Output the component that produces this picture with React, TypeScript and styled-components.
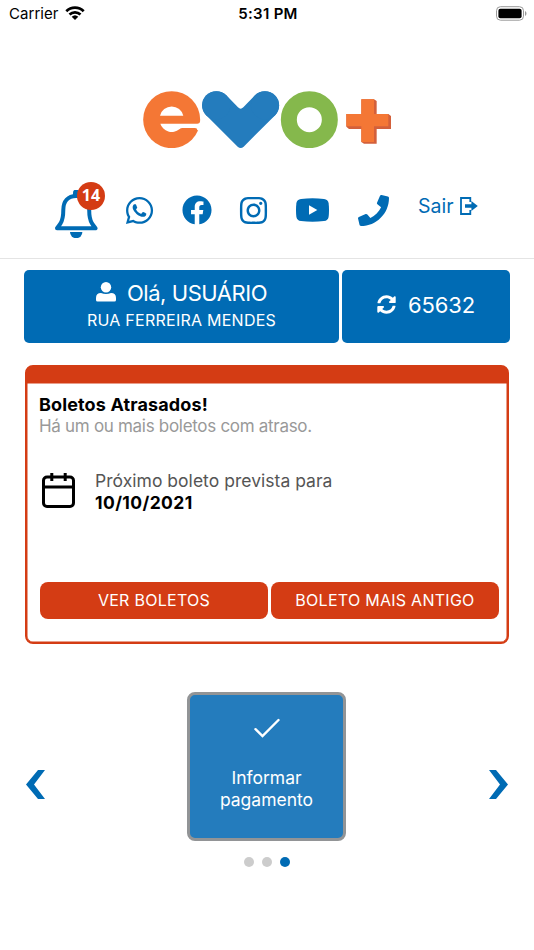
import React from "react";
import styled, { createGlobalStyle } from "styled-components";
import { FaFacebook, FaInstagram, FaPhone, FaSyncAlt, FaWhatsapp } from "react-icons/fa";

const blue = "#006bb4";
const red = "#d43c14";

const GlobalStyle = createGlobalStyle`
  * { box-sizing: border-box; }
  body { margin: 0; background: #fff; font-family: Inter, "Liberation Sans", sans-serif; }
  svg { display: block; flex: none; }
  button { font: inherit; border: 0; margin: 0; padding: 0; background: none; cursor: pointer; }
`;

const Screen = styled.main`
  width: 534px;
  height: 950px;
  display: flex;
  flex-direction: column;
  overflow: hidden;
`;

const StatusBar = styled.div`
  height: 28px;
  display: grid;
  grid-template-columns: 1fr auto 1fr;
  align-items: center;
  padding: 0 7px 0 9px;
  color: #000;
`;

const Carrier = styled.div`
  display: flex;
  align-items: center;
  gap: 6px;

  svg { margin-bottom: 2px; }
`;

const Battery = styled.svg`
  justify-self: end;
  margin-bottom: 2px;
`;

const Text = styled.span<{ $size: number; $weight?: number; $spacing?: number; $color?: string; $line?: number }>`
  font-size: ${(p) => p.$size}px;
  font-weight: ${(p) => p.$weight ?? 400};
  letter-spacing: ${(p) => p.$spacing ?? 0}px;
  color: ${(p) => p.$color ?? "inherit"};
  line-height: ${(p) => p.$line ?? 22}px;
  white-space: nowrap;
`;

const Header = styled.header`
  height: 231px;
  padding-top: 63px;
  border-bottom: 1px solid #e4e4e4;
`;

const Logo = styled.svg`
  margin-left: 143px;
`;

const IconRow = styled.nav`
  display: flex;
  align-items: center;
  height: 56px;
  margin: 34px 0 0 55px;
  color: ${blue};
`;

const IconButton = styled.button<{ $width: number; $gap?: number }>`
  width: ${(p) => p.$width}px;
  height: 56px;
  margin-right: ${(p) => p.$gap ?? 29}px;
  display: flex;
  align-items: center;
  justify-content: center;
  position: relative;
  color: inherit;
`;

const Bell = styled.svg`
  margin-top: 8px;
`;

const Badge = styled.span`
  position: absolute;
  top: 0;
  left: 22px;
  width: 28px;
  height: 28px;
  border-radius: 50%;
  background: ${red};
  color: #fff;
  font: 700 16px/27px "Noto Sans", sans-serif;
  text-align: center;
`;

const Logout = styled.button`
  display: flex;
  align-items: center;
  gap: 6px;
  height: 22px;
  margin-bottom: 8px;
  color: ${blue};
`;

const Account = styled.section`
  display: grid;
  grid-template-columns: 315px 168px;
  gap: 3px;
  margin: 11px 0 0 24px;
  color: #fff;
`;

const AccountBox = styled.div`
  height: 73px;
  padding-bottom: 3px;
  border-radius: 5px;
  background: ${blue};
  display: flex;
  flex-direction: column;
  align-items: center;
  justify-content: center;
`;

const Line = styled.div<{ $gap: number }>`
  display: flex;
  align-items: center;
  gap: ${(p) => p.$gap}px;

  svg { margin-bottom: 2px; }
`;

const Card = styled.section`
  width: 484px;
  height: 279px;
  margin: 22px 0 0 25px;
  border: 2px solid ${red};
  border-top-width: 18px;
  border-radius: 8px;
  box-shadow: inset 0 0 0 0.5px ${red};
  display: flex;
  flex-direction: column;
  padding: 11px 8px 0 12px;
`;

const Stack = styled.div`
  display: flex;
  flex-direction: column;
`;

const NextBill = styled.div`
  display: flex;
  align-items: center;
  gap: 20px;
  margin: 33px 0 0 3px;
  height: 44px;

  svg { margin-bottom: 3px; }
`;

const Actions = styled.div`
  display: grid;
  grid-template-columns: 228px 228px;
  gap: 3px;
  margin: 68px 0 0 1px;
`;

const ActionButton = styled.button`
  height: 37px;
  padding-bottom: 1px;
  border-radius: 8px;
  background: ${red};
  color: #fff;
`;

const Carousel = styled.section`
  display: flex;
  justify-content: space-between;
  align-items: center;
  margin: 48px 26px 0 26px;
  height: 149px;
`;

const Arrow = styled.button`
  margin-top: 36px;
  color: ${blue};
`;

const Slide = styled.button`
  width: 159px;
  height: 149px;
  margin-right: 1px;
  border: 3px solid #929496;
  border-radius: 8px;
  background: #247cbd;
  color: #fff;
  display: flex;
  flex-direction: column;
  align-items: center;
  justify-content: flex-start;
  padding-top: 21px;
  gap: 27px;
`;

const Dots = styled.div`
  display: flex;
  justify-content: center;
  gap: 8px;
  margin-top: 16px;
`;

const Dot = styled.i<{ $active?: boolean }>`
  width: 10px;
  height: 10px;
  border-radius: 50%;
  background: ${(p) => (p.$active ? blue : "#ccc")};
`;

export default function App() {
  return (
    <Screen>
      <GlobalStyle />
      <StatusBar>
        <Carrier>
          <Text $size={15} $spacing={0.05}>Carrier</Text>
          <svg width="20" height="15" viewBox="0 0 20 15">
            <g fill="none" stroke="#000" strokeWidth="2.7">
              <path d="M1.3 5.2a12.5 12.5 0 0 1 17.4 0" />
              <path d="M4.5 8.5a8 8 0 0 1 11 0" />
            </g>
            <path d="M6.7 10.7a4.8 4.8 0 0 1 6.6 0L10 14Z" />
          </svg>
        </Carrier>
        <Text $size={15} $weight={600} $spacing={0.3}>5:31 PM</Text>
        <Battery width="32" height="15" viewBox="0 0 32 15">
          <rect x="1.5" y=".7" width="27" height="13.5" rx="4" fill="none" stroke="#999" />
          <rect x="3.4" y="2.7" width="23.2" height="9.5" rx="2" />
          <path d="M30 5v5c2-1 2-4 0-5" fill="#999" />
        </Battery>
      </StatusBar>

      <Header>
        <Logo width="248" height="57" viewBox="39 33 744 171">
          <circle cx="125" cy="119" r="85.5" fill="#f47735" />
          <path d="M90 107a36 36 0 0 1 70 0Z" fill="#fff" />
          <path d="M91 131H202Q208 131 211 125V151H202Q202 144 195 144H158Q152 144 148 148A36 36 0 0 1 91 131Z" fill="#fff" />
          <path d="M227 104A42.5 42.5 0 0 1 289 46L324 82Q332 90 340 82L375 46A42.5 42.5 0 0 1 437 104L341 200Q332 208 323 200Z" fill="#247cbd" />
          <circle cx="258.5" cy="76" r="42.5" fill="#247cbd" />
          <circle cx="405" cy="76" r="42.5" fill="#247cbd" />
          <circle cx="538" cy="119" r="61.5" fill="none" stroke="#85b84c" strokeWidth="48" />
          <path d="M694 58H732L740 63V102H775L783 108V147H740V191H702L694 186V147H657L649 140V102H694Z" fill="#d3603b" />
          <path d="M694 58H732V102H775V139H732V186H694V139H649V102H694Z" fill="#f47735" />
        </Logo>
        <IconRow>
          <IconButton $width={43} $gap={28} aria-label="Notificações">
            <Bell width="43" height="48" viewBox="0 0 43 48">
              <path d="M5.5 33.5C8 29.5 8.3 24.5 8.3 20C8.3 11 13 6 21.2 6S34.2 11 34.2 20C34.2 24.5 34.5 29.5 37 33.5L40.5 38.3H2Z" fill="none" stroke="currentColor" strokeWidth="4" strokeLinejoin="round" />
              <path d="M18 7V2.8a3.2 3.2 0 0 1 6.4 0V7Z" fill="currentColor" />
              <path d="M15 42H27.4a6.2 6.2 0 0 1-12.4 0" fill="currentColor" />
            </Bell>
            <Badge>14</Badge>
          </IconButton>
          <IconButton $width={27} aria-label="WhatsApp"><FaWhatsapp size={31} /></IconButton>
          <IconButton $width={29} aria-label="Facebook"><FaFacebook size={30} /></IconButton>
          <IconButton $width={27} aria-label="Instagram"><FaInstagram size={31} /></IconButton>
          <IconButton $width={33} aria-label="YouTube">
            <svg width="33" height="24" viewBox="0 0 33 24">
              <path d="M5 .9Q16.5-.4 28 .9Q32 1.4 32.6 5Q33.4 12 32.6 19Q32 22.6 28 23.1Q16.5 24.4 5 23.1Q1 22.6.4 19Q-.4 12 .4 5Q1 1.4 5 .9Z" fill="currentColor" />
              <path d="M13 7.2L21.3 12L13 16.8Z" fill="#fff" />
            </svg>
          </IconButton>
          <IconButton $width={31} aria-label="Telefone"><FaPhone size={31} /></IconButton>
          <Logout>
            <Text $size={19.5}>Sair</Text>
            <svg width="18" height="18" viewBox="0 0 18 18">
              <path d="M10.3 5V1H1V17H10.3V13" fill="none" stroke="currentColor" strokeWidth="1.8" />
              <path d="M5 7.2H11.4V4L17.8 9L11.4 14V10.8H5Z" fill="currentColor" />
            </svg>
          </Logout>
        </IconRow>
      </Header>

      <Account>
        <AccountBox>
          <Line $gap={11}>
            <svg width="20" height="20" viewBox="0 0 20 20" fill="currentColor">
              <circle cx="10" cy="5.2" r="5.2" />
              <path d="M0 18V16Q0 11 5 11Q10 13 15 11Q20 11 20 16V18Q20 19.6 18.4 19.6H1.6Q0 19.6 0 18Z" />
            </svg>
            <Text $size={22} $line={30} $spacing={-0.45}>Olá, USUÁRIO</Text>
          </Line>
          <Text $size={16} $line={24} $spacing={0.25}>RUA FERREIRA MENDES</Text>
        </AccountBox>
        <AccountBox>
          <Line $gap={12}>
            <FaSyncAlt size={19} />
            <Text $size={22} $spacing={-0.15}>65632</Text>
          </Line>
        </AccountBox>
      </Account>

      <Card>
        <Stack>
          <Text $size={18} $weight={700} $color="#000" $spacing={0.13}>Boletos Atrasados!</Text>
          <Text $size={17} $color="#999" $line={21} $spacing={-0.3}>Há um ou mais boletos com atraso.</Text>
        </Stack>
        <NextBill>
          <svg width="33" height="37" viewBox="0 0 33 37" fill="none" stroke="#000" strokeWidth="3">
            <rect x="1.5" y="5" width="30" height="29.5" rx="3.5" />
            <path d="M1.5 15H31.5M9.8 1V9M23.2 1V9" />
          </svg>
          <Stack>
            <Text $size={17.5} $color="#555" $spacing={0.03}>Próximo boleto prevista para</Text>
            <Text $size={17.5} $weight={700} $color="#000" $spacing={0.4}>10/10/2021</Text>
          </Stack>
        </NextBill>
        <Actions>
          <ActionButton><Text $size={16} $spacing={0.27}>VER BOLETOS</Text></ActionButton>
          <ActionButton><Text $size={16} $spacing={0.27}>BOLETO MAIS ANTIGO</Text></ActionButton>
        </Actions>
      </Card>

      <Carousel>
        <Arrow aria-label="Anterior">
          <svg width="19" height="29" viewBox="0 0 19 29"><path d="M19 0H12L0 14.5L12 29H19L8 14.5Z" fill="currentColor" /></svg>
        </Arrow>
        <Slide>
          <svg width="28" height="24" viewBox="0 0 28 24"><path d="M2.5 13.2L9.5 20L25.5 4" fill="none" stroke="currentColor" strokeWidth="2.4" strokeLinecap="round" /></svg>
          <Stack>
            <Text $size={17.5}>Informar</Text>
            <Text $size={17.5}>pagamento</Text>
          </Stack>
        </Slide>
        <Arrow aria-label="Próximo">
          <svg width="19" height="29" viewBox="0 0 19 29"><path d="M0 0H7L19 14.5L7 29H0L11 14.5Z" fill="currentColor" /></svg>
        </Arrow>
      </Carousel>
      <Dots><Dot /><Dot /><Dot $active /></Dots>
    </Screen>
  );
}
